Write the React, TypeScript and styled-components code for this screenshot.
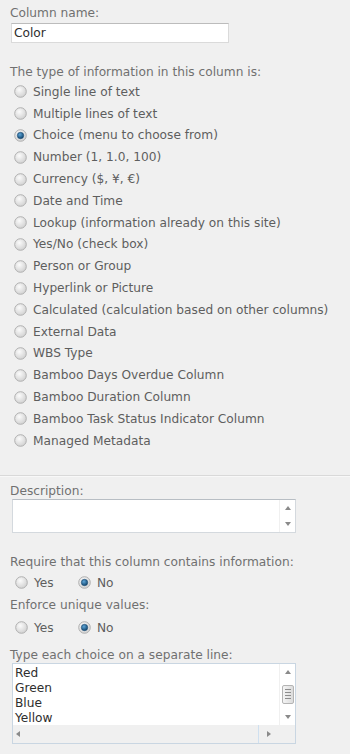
import React from "react";
import styled, { createGlobalStyle } from "styled-components";

const Global = createGlobalStyle`
  html, body { margin: 0; padding: 0; background: #f0f0f0; }
  body { font-family: "DejaVu Sans", Verdana, sans-serif; }
`;

const Page = styled.div`
  width: 350px;
  min-height: 754px;
  background: #f0f0f0;
  padding-top: 5px;
  box-sizing: border-box;
  font-size: 12.2px;
  color: #666;
`;

const Section = styled.div`
  padding-left: 10px;
  padding-right: 8px;
`;

const Label = styled.div<{ $mt?: number }>`
  line-height: 16px;
  height: 16px;
  color: #707070;
  margin-top: ${(p) => p.$mt ?? 0}px;
  white-space: nowrap;
`;

const TextInput = styled.div`
  margin-top: 2px;
  margin-left: 1px;
  width: 218px;
  height: 20px;
  box-sizing: border-box;
  background: #fff;
  border: 1px solid #dadada;
  border-top-color: #bcbcbc;
  color: #2e2e2e;
  line-height: 18px;
  padding-left: 2px;
  font-size: 12.2px;
`;

const RadioList = styled.div`
  margin-top: 1px;
  display: flex;
  flex-direction: column;
`;

const OptionRow = styled.div`
  height: 21.8px;
  display: flex;
  align-items: center;
  padding-left: 4px;
  color: #5e5e5e;
  white-space: nowrap;
`;

const RadioIcon = styled.svg`
  flex: none;
  width: 13px;
  height: 13px;
  margin-right: 6px;
`;

const Radio = ({ checked }: { checked?: boolean }) => (
  <RadioIcon viewBox="0 0 13 13">
    <defs>
      <radialGradient id="rg" cx="40%" cy="35%" r="70%">
        <stop offset="0%" stopColor="#fbfbfb" />
        <stop offset="100%" stopColor="#cfcfcf" />
      </radialGradient>
      <radialGradient id="bg" cx="40%" cy="35%" r="70%">
        <stop offset="0%" stopColor="#5fa6d8" />
        <stop offset="100%" stopColor="#0b3f68" />
      </radialGradient>
    </defs>
    <circle cx="6.5" cy="6.5" r="5.8" fill="url(#rg)" stroke="#b0b0b0" strokeWidth="1" />
    {checked && <circle cx="6.5" cy="6.5" r="3.2" fill="url(#bg)" stroke="#1c4c74" strokeWidth="0.6" />}
  </RadioIcon>
);

const Divider = styled.div`
  margin-top: 23px;
  height: 0;
  border-top: 1px solid #d9d9d9;
  border-bottom: 1px solid #f8f8f8;
`;

const Box = styled.div<{ $h: number }>`
  margin-left: 2px;
  width: 284px;
  height: ${(p) => p.$h}px;
  box-sizing: border-box;
  background: #fff;
  border: 1px solid #d4d9de;
  border-top-color: #b8bec4;
  display: grid;
  grid-template-columns: 1fr 16px;
`;

const BoxWithH = styled(Box)`
  grid-template-rows: 1fr 18px;
  border-color: #c9d6e2;
`;

const BoxText = styled.div`
  padding: 2px 0 0 2px;
  line-height: 15px;
  color: #2e2e2e;
  overflow: hidden;
`;

const VScroll = styled.div`
  display: flex;
  flex-direction: column;
  align-items: center;
  justify-content: space-between;
  padding: 6px 0 6px;
  border-left: 1px solid #f0f0f0;
`;

const ThumbBox = styled.div`
  width: 12px;
  height: 19px;
  box-sizing: border-box;
  border: 1px solid #b4b4b4;
  border-radius: 2px;
  background: linear-gradient(90deg, #f4f4f4, #dcdcdc);
  display: flex;
  flex-direction: column;
  align-items: center;
  justify-content: center;
  gap: 2px;
`;

const Grip = styled.div`
  width: 6px;
  height: 1px;
  background: #8d8d8d;
`;

const HScroll = styled.div`
  background: #f0f0f0;
  display: flex;
  align-items: center;
  justify-content: space-between;
  padding: 0 8px 0 3px;
  position: relative;
`;

const HLine = styled.div`
  position: absolute;
  left: 245px;
  top: 0;
  bottom: 0;
  width: 1px;
  background: #cfe0f0;
`;

const Corner = styled.div`
  background: #f0f0f0;
`;

const Arrow = ({ dir }: { dir: "up" | "down" | "left" | "right" }) => {
  const pts =
    dir === "up"
      ? "0,4 3,0 6,4"
      : dir === "down"
      ? "0,0 6,0 3,4"
      : dir === "left"
      ? "4,0 4,6 0,3"
      : "0,0 0,6 4,3";
  const w = dir === "up" || dir === "down" ? 6 : 4;
  const h = dir === "up" || dir === "down" ? 4 : 6;
  return (
    <svg width={w} height={h} viewBox={`0 0 ${w} ${h}`}>
      <polygon points={pts} fill="#8a8a8a" />
    </svg>
  );
};

const YesNoRow = styled.div<{ $mt?: number }>`
  margin-top: ${(p) => p.$mt ?? 0}px;
  height: 20px;
  display: flex;
  align-items: center;
  padding-left: 5px;
  color: #5e5e5e;
`;

const YesNoItem = styled.div<{ $w: number }>`
  display: flex;
  align-items: center;
  width: ${(p) => p.$w}px;
`;

const options = [
  "Single line of text",
  "Multiple lines of text",
  "Choice (menu to choose from)",
  "Number (1, 1.0, 100)",
  "Currency ($, ¥, €)",
  "Date and Time",
  "Lookup (information already on this site)",
  "Yes/No (check box)",
  "Person or Group",
  "Hyperlink or Picture",
  "Calculated (calculation based on other columns)",
  "External Data",
  "WBS Type",
  "Bamboo Days Overdue Column",
  "Bamboo Duration Column",
  "Bamboo Task Status Indicator Column",
  "Managed Metadata",
];

const YesNo = ({ mt }: { mt?: number }) => (
  <YesNoRow $mt={mt}>
    <YesNoItem $w={63}>
      <Radio />
      Yes
    </YesNoItem>
    <YesNoItem $w={50}>
      <Radio checked />
      No
    </YesNoItem>
  </YesNoRow>
);

export default function App() {
  return (
    <Page>
      <Global />
      <Section>
        <Label>Column name:</Label>
        <TextInput>Color</TextInput>
        <Label $mt={21}>The type of information in this column is:</Label>
        <RadioList>
          {options.map((o, i) => (
            <OptionRow key={o}>
              <Radio checked={i === 2} />
              {o}
            </OptionRow>
          ))}
        </RadioList>
      </Section>
      <Divider />
      <Section>
        <Label $mt={6}>Description:</Label>
        <Box $h={34}>
          <BoxText />
          <VScroll>
            <Arrow dir="up" />
            <Arrow dir="down" />
          </VScroll>
        </Box>
        <Label $mt={21}>Require that this column contains information:</Label>
        <YesNo mt={3} />
        <Label $mt={4}>Enforce unique values:</Label>
        <YesNo mt={5} />
        <Label $mt={9}>Type each choice on a separate line:</Label>
        <BoxWithH $h={81}>
          <BoxText>
            Red
            <br />
            Green
            <br />
            Blue
            <br />
            Yellow
          </BoxText>
          <VScroll>
            <Arrow dir="up" />
            <ThumbBox>
              <Grip />
              <Grip />
              <Grip />
              <Grip />
            </ThumbBox>
            <Arrow dir="down" />
          </VScroll>
          <HScroll>
            <Arrow dir="left" />
            <HLine />
            <Arrow dir="right" />
          </HScroll>
          <Corner />
        </BoxWithH>
      </Section>
    </Page>
  );
}
